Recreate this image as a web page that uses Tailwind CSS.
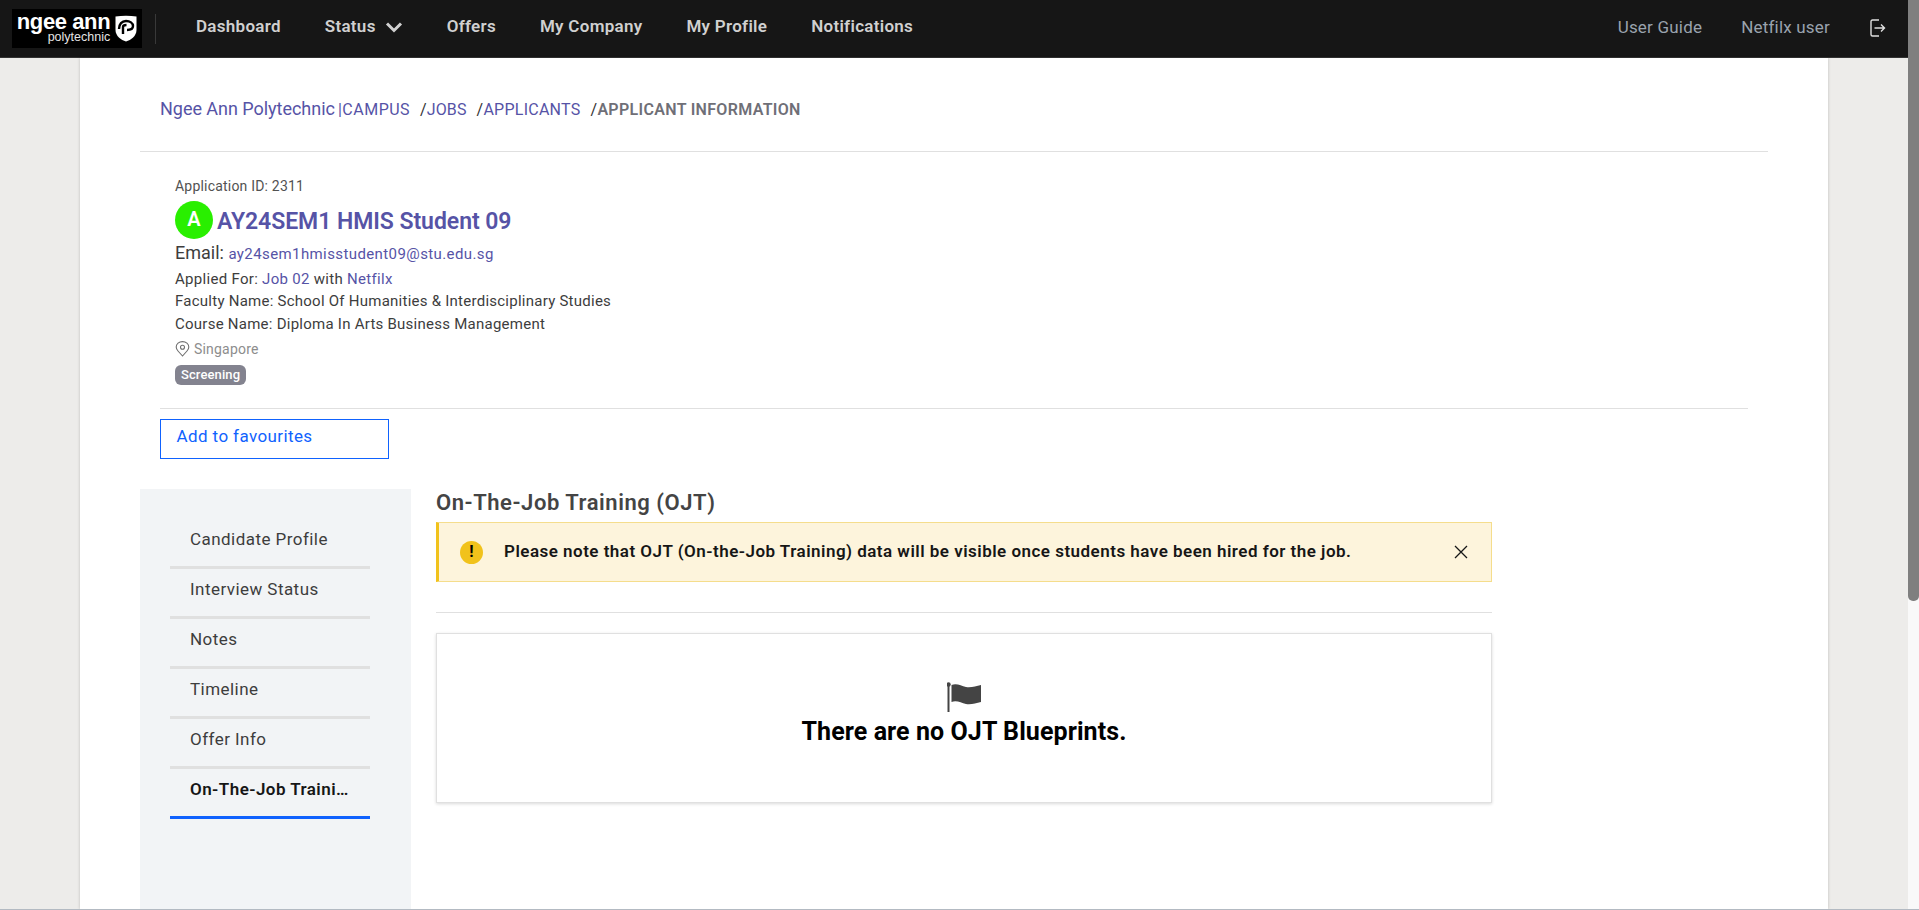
<!doctype html>
<html>
<head>
<meta charset="utf-8">
<title>Applicant Information</title>
<script src="https://cdn.jsdelivr.net/npm/@tailwindcss/browser@4"></script>
</head>
<body class="m-0 bg-[#edecea] font-['Roboto','Liberation_Sans',sans-serif]">
<div class="relative h-[910px] w-[1919px] overflow-hidden flex flex-col border-b border-[#b3bac2]">
  <header class="h-[58px] shrink-0 bg-[#161616] border-b border-[#333] flex items-center pr-[11px]">
    <div class="ml-[12px] w-[130px] h-[39px] bg-black flex items-center justify-center gap-[5px] text-white">
      <div class="flex flex-col items-end pb-[1px]">
        <span class="text-[22px] font-bold leading-[18px] tracking-[-0.4px] font-['Liberation_Sans',sans-serif]">ngee ann</span>
        <span class="text-[12.500px] leading-[12px] text-[#e5e5e5] font-['Liberation_Sans',sans-serif]">polytechnic</span>
      </div>
      <svg width="22" height="27" viewBox="0 0 22 27"><path d="M0.500 1.500C7 0.500 15 0.500 21.500 1.500V15C21.500 21 16 25 11 26.500C6 25 0.500 21 0.500 15Z" fill="#fff"/><path d="M4 14C4 9 7 6 11 6S18 8 18 11 15 15 12 15M8 19V12C8 10.500 10 10 11.500 10" fill="none" stroke="#000" stroke-width="2.400"/></svg>
    </div>
    <div class="ml-[13px] w-px h-[30px] bg-[#393939]"></div>
    <nav class="ml-[40px] -mt-[3px] flex items-center gap-[44px] text-[17px] tracking-[0.28px] font-semibold text-[#d0d0d0]">
      <a>Dashboard</a>
      <a class="flex items-center gap-[9px]">Status
        <svg width="18" height="12" viewBox="0 0 18 12"><path d="M2 2.500L9 9.500L16 2.500" fill="none" stroke="#d0d0d0" stroke-width="3"/></svg>
      </a>
      <a>Offers</a>
      <a>My Company</a>
      <a>My Profile</a>
      <a>Notifications</a>
    </nav>
    <div class="ml-auto -mt-[1px] flex items-center text-[17px] tracking-[0.2px] text-[#9aa3ae]">
      <a class="mr-[39px]">User Guide</a>
      <a class="mr-[40px]">Netfilx user</a>
      <svg class="mr-[22px]" width="16" height="18" viewBox="0 0 16 18" fill="none" stroke="#e0e0e0" stroke-width="1.400"><path d="M9 1H2.500C1.500 1 1 1.500 1 2.500V15.500C1 16.500 1.500 17 2.500 17H9"/><path d="M4.500 9H14.500M11 5.500L14.500 9L11 12.500"/></svg>
    </div>
  </header>

  <div class="flex-1 flex min-h-0 pr-[11px]">
    <main class="mx-[80px] flex-1 min-w-0 bg-white shadow-[0_0_3px_rgba(0,0,0,0.2)] px-[60px] text-[#3d3d3d]">
      <div class="h-[94px] pl-[20px] pt-[41px] text-[#5653a6] leading-[20px] border-b border-[#e0e0e0] flex items-baseline">
        <span class="text-[18px] tracking-[-0.03px]">Ngee Ann Polytechnic</span>
        <span class="text-[16px] ml-[3px] tracking-[0.5px]">|CAMPUS</span>
        <span class="text-[16px] ml-[10px] tracking-[0.1px]"><span class="text-[#333]">/</span>JOBS</span>
        <span class="text-[16px] ml-[10px] tracking-[0.25px]"><span class="text-[#333]">/</span>APPLICANTS</span>
        <span class="text-[16px] ml-[10px] font-semibold tracking-[0.32px] text-[#6f6f77]"><span class="text-[#333] font-normal">/</span>APPLICANT INFORMATION</span>
      </div>

      <section class="mx-[20px] pl-[15px] pt-[25px] h-[257px] border-b border-[#e0e0e0]">
        <p class="text-[14px] leading-[18px] tracking-[0.2px] text-[#525252]">Application ID: 2311</p>
        <div class="mt-[6px] flex items-center gap-[4px]">
          <span class="w-[38px] h-[38px] rounded-full bg-[#29ef00] text-white text-[20px] font-semibold pb-[2px] flex items-center justify-center">A</span>
          <h1 class="pt-[4px] text-[23px] font-semibold text-[#5653a6] tracking-[-0.05px]">AY24SEM1 HMIS Student 09</h1>
        </div>
        <p class="mt-[1px] text-[18px] leading-[24px]">Email: <span class="text-[15px] text-[#5653a6] tracking-[0.4px]">ay24sem1hmisstudent09@stu.edu.sg</span></p>
        <p class="mt-[2px] text-[15px] leading-[22px] tracking-[0.3px]">Applied For: <span class="text-[#5653a6]">Job 02</span> with <span class="text-[#5653a6]">Netfilx</span></p>
        <p class="text-[15px] leading-[23px] tracking-[0.25px]">Faculty Name: School Of Humanities &amp; Interdisciplinary Studies</p>
        <p class="text-[15px] leading-[23px] tracking-[0.25px]">Course Name: Diploma In Arts Business Management</p>
        <p class="mt-[2px] flex items-center gap-[4px] text-[14px] leading-[22px] tracking-[0.2px] text-[#8d8d8d]">
          <svg width="15" height="16" viewBox="0 0 15 16" fill="none" stroke="#6f6f6f" stroke-width="1.100"><path d="M7.500 15L3 10C1.500 8.300 1.200 7 1.200 6A6.300 5.400 0 0 1 13.800 6C13.800 7 13.500 8.300 12 10Z"/><circle cx="7.500" cy="6.300" r="2"/></svg>
          Singapore
        </p>
        <span class="mt-[5px] inline-flex items-center h-[20px] px-[6px] rounded-[6px] bg-[#83838f] text-white text-[13px] tracking-[0.1px] font-medium">Screening</span>
      </section>

      <button class="mt-[10px] ml-[20px] w-[229px] h-[40px] border border-[#0f62fe] text-[#0f62fe] text-[17px] tracking-[0.4px] text-left pl-[15.500px] pb-[4px] block">Add to favourites</button>

      <div class="mt-[30px] flex">
        <aside class="w-[271px] h-[430px] shrink-0 bg-[#f2f4f6] pt-[30px] pl-[30px]">
          <ul class="w-[200px] text-[17px] text-[#3d3d3d] tracking-[0.45px]">
            <li class="h-[50px] pl-[20px] pt-[8px] leading-[24px] border-b-[3px] border-[#e0e0e0]">Candidate Profile</li>
            <li class="h-[50px] pl-[20px] pt-[8px] leading-[24px] border-b-[3px] border-[#e0e0e0]">Interview Status</li>
            <li class="h-[50px] pl-[20px] pt-[8px] leading-[24px] border-b-[3px] border-[#e0e0e0]">Notes</li>
            <li class="h-[50px] pl-[20px] pt-[8px] leading-[24px] border-b-[3px] border-[#e0e0e0]">Timeline</li>
            <li class="h-[50px] pl-[20px] pt-[8px] leading-[24px] border-b-[3px] border-[#e0e0e0]">Offer Info</li>
            <li class="h-[50px] pl-[20px] pr-[20px] pt-[8px] leading-[24px] border-b-[3px] border-[#0f62fe] font-semibold text-[#161616] truncate">On-The-Job Training (OJT)</li>
          </ul>
        </aside>
        <div class="ml-[25px] w-[1056px]">
          <h2 class="text-[22px] leading-[28px] font-semibold tracking-[0.55px] text-[#444]">On-The-Job Training (OJT)</h2>
          <div class="mt-[5px] h-[60px] bg-[#fdf4dc] border border-[#f5dd8c] border-l-[3px] border-l-[#f1c21b] flex items-center pl-[21px] pr-[23px]">
            <span class="w-[23px] h-[23px] rounded-full bg-[#f1c21b] text-black text-[16px] font-bold flex items-center justify-center">!</span>
            <p class="ml-[21px] flex-1 text-[17px] font-semibold text-[#161616] tracking-[0.48px]">Please note that OJT (On-the-Job Training) data will be visible once students have been hired for the job.</p>
            <svg width="14" height="14" viewBox="0 0 14 14" fill="none" stroke="#161616" stroke-width="1.300"><path d="M1 1L13 13M13 1L1 13"/></svg>
          </div>
          <div class="mt-[30px] border-t border-[#e0e0e0]"></div>
          <div class="mt-[20px] h-[170px] border border-[#e0e0e0] shadow-[0_1px_3px_rgba(0,0,0,0.15)] flex flex-col items-center pt-[48px]">
            <svg width="34" height="30" viewBox="1 0 34 30"><path d="M2.500 3V30" stroke="#444" stroke-width="2"/><circle cx="2.500" cy="2.500" r="2.200" fill="#444"/><path d="M5.500 3C11 1 15 4 20 5C25 6 30 4 35 3V20C30 21 25 23 20 22C15 21 11 18 5.500 20Z" fill="#444"/></svg>
            <p class="text-[25px] leading-[32px] mt-[4px] font-bold tracking-[0.08px] text-black">There are no OJT Blueprints.</p>
          </div>
        </div>
      </div>
    </main>
  </div>

  <div class="absolute right-0 top-0 bottom-0 w-[11px] bg-[#f9f9f9]">
    <div class="h-[601px] bg-[#7f7f7f] rounded-b-[5px]"></div>
  </div>
</div>
</body>
</html>
